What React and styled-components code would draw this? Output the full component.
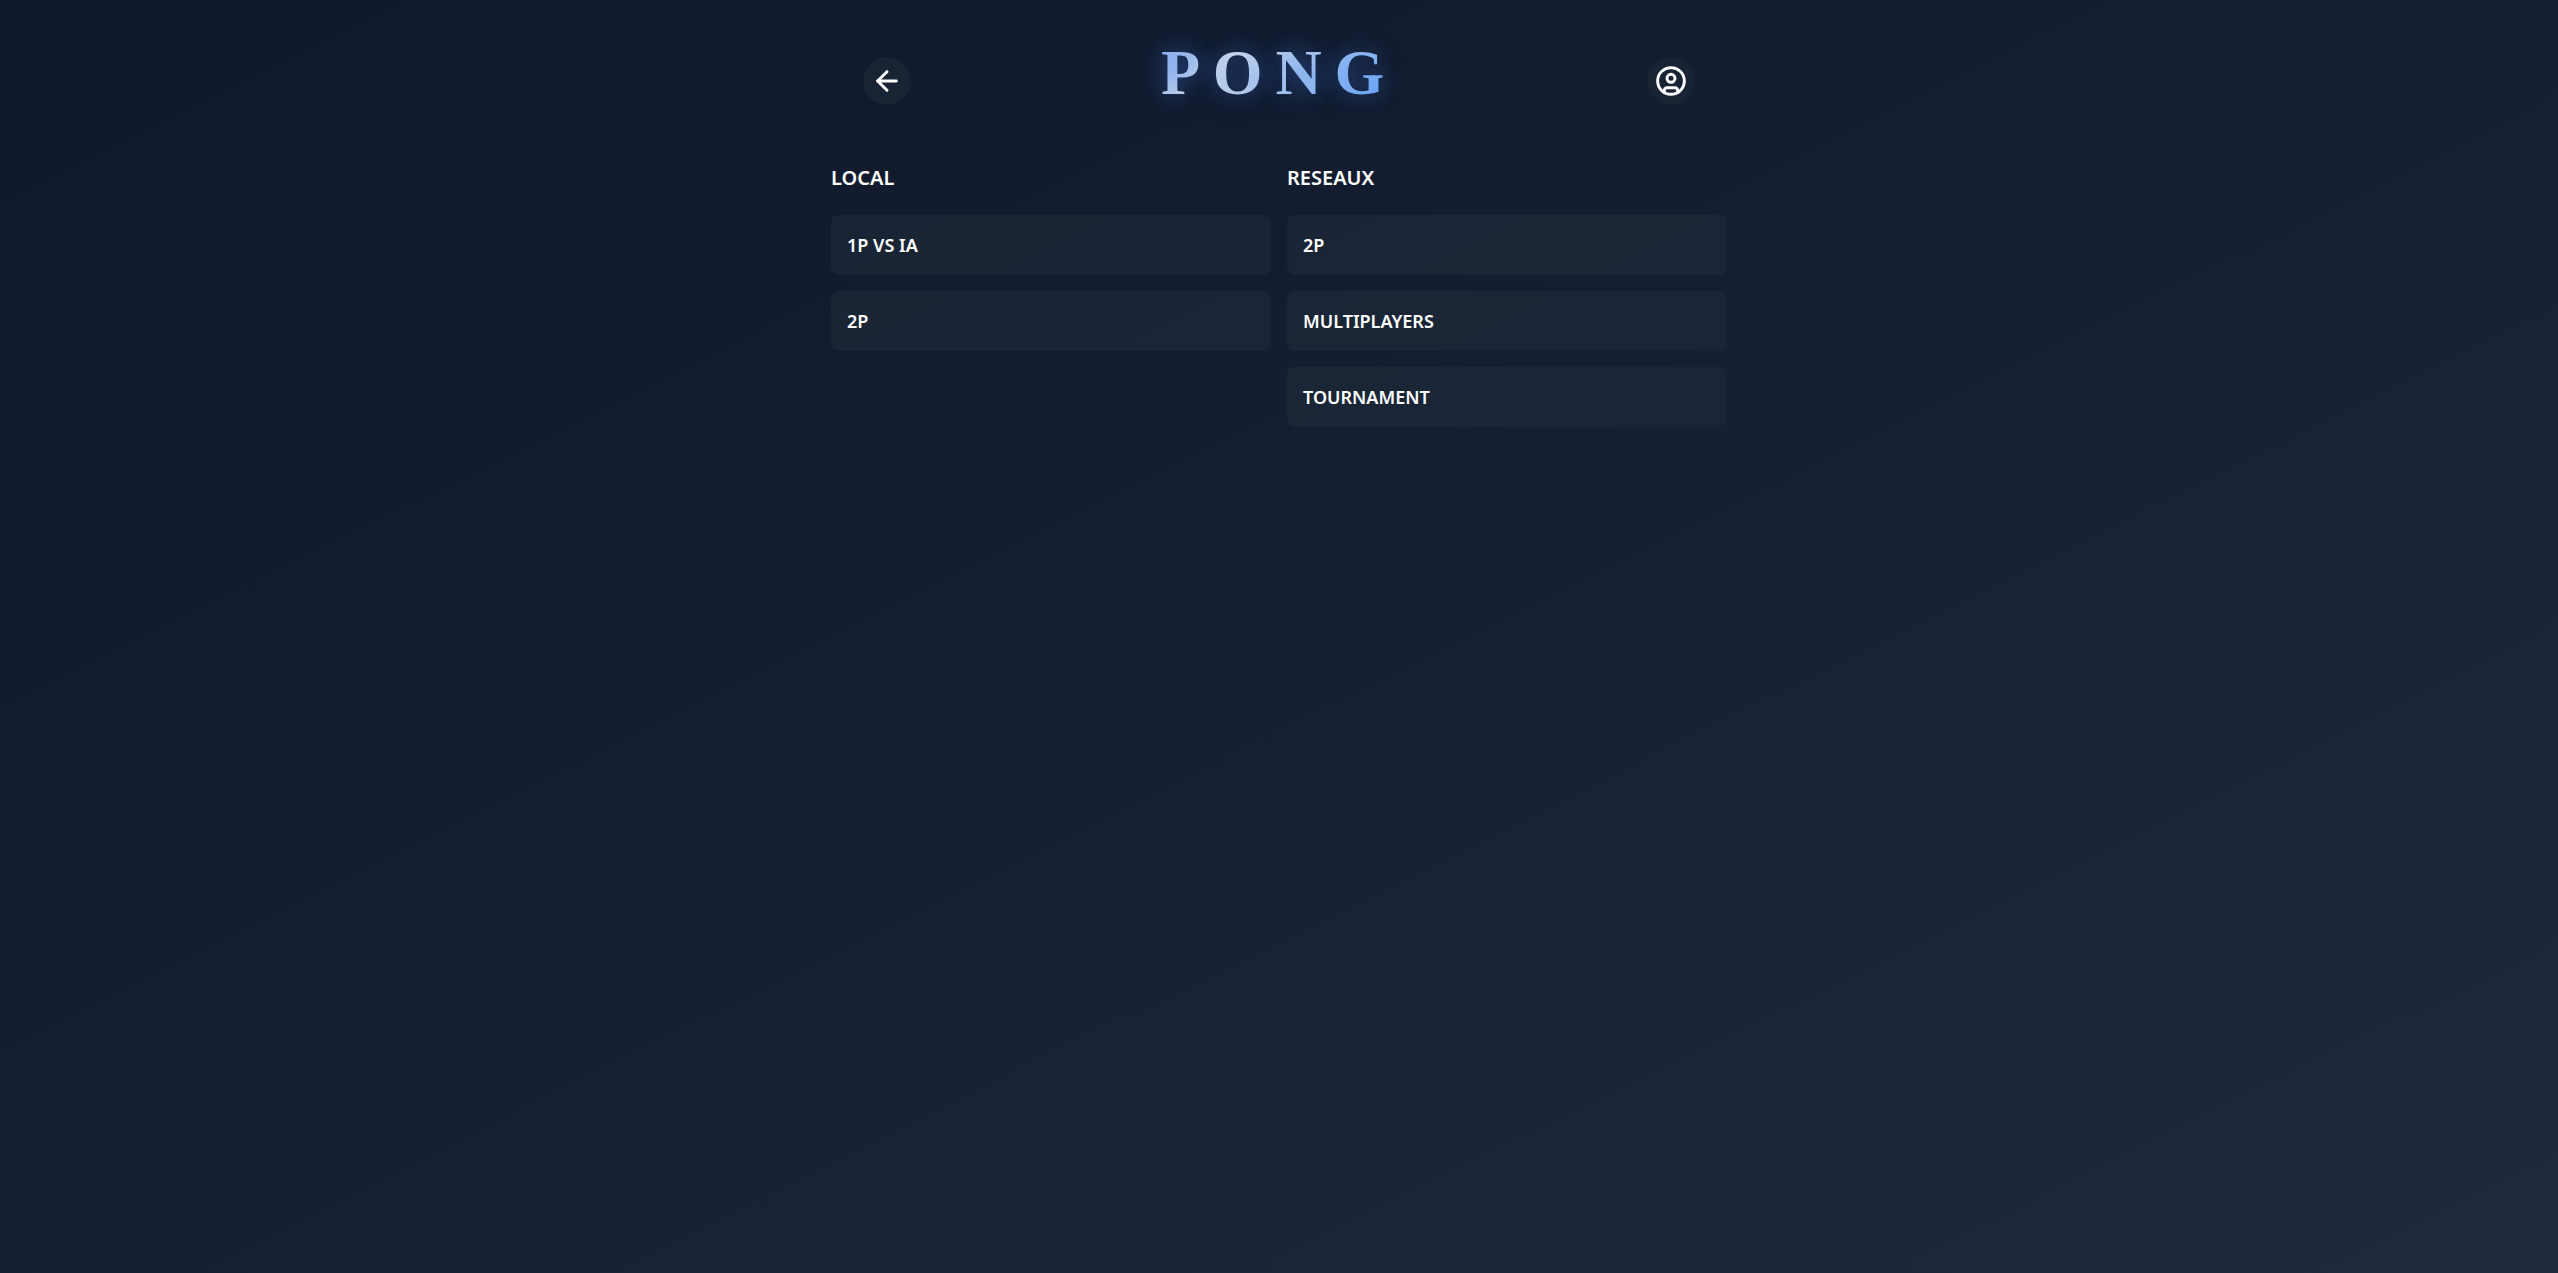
import React from "react";
import styled, { createGlobalStyle } from "styled-components";
import { ArrowLeft, CircleUser } from "lucide-react";

const GlobalStyle = createGlobalStyle`
  *, *::before, *::after { box-sizing: border-box; }
  body {
    margin: 0;
    color: #fff;
    font-family: "Noto Sans", "Open Sans", sans-serif;
  }
`;

const Page = styled.div`
  min-height: 100vh;
  background: linear-gradient(to bottom right, #0f172a, #1e293b);
`;

const Shell = styled.main`
  width: 100%;
  max-width: 896px;
  margin: 0 auto;
`;

const Header = styled.header`
  display: flex;
  align-items: center;
  justify-content: space-between;
  padding: 32px 32px 16px;
`;

const IconButton = styled.button`
  display: grid;
  place-items: center;
  width: 48px;
  height: 48px;
  padding: 0;
  border: 0;
  border-radius: 50%;
  background: #182334;
  color: #fff;
  cursor: pointer;
`;

const Title = styled.h1`
  margin: 0 0 16px;
  font-family: "Liberation Serif", serif;
  font-size: 64px;
  font-weight: 700;
  line-height: 82px;
  letter-spacing: 0.2em;
  color: transparent;
  background: linear-gradient(135deg, #80aaf2, #d8dfe8 30%, #60a0fa);
  background-clip: text;
  text-shadow:
    0 0 20px rgba(59, 130, 246, 0.4),
    0 0 40px rgba(59, 130, 246, 0.2);
`;

const Modes = styled.div`
  display: grid;
  grid-template-columns: repeat(2, 1fr);
  gap: 16px;
  padding-bottom: 32px;
`;

const Column = styled.section`
  display: flex;
  flex-direction: column;
  gap: 16px;
`;

const ColumnTitle = styled.h2`
  margin: 0;
  padding: 18px 0 7px;
  font-size: 20px;
  font-weight: 600;
  line-height: 28px;
`;

const ModeButton = styled.button`
  padding: 16px;
  border: 0;
  border-radius: 8px;
  background: rgba(30, 42, 58, 0.6);
  color: #fff;
  font: 600 18px/28px "Noto Sans", "Open Sans", sans-serif;
  text-align: left;
  cursor: pointer;
`;

const columns = [
  { title: "LOCAL", modes: ["1P VS IA", "2P"] },
  { title: "RESEAUX", modes: ["2P", "MULTIPLAYERS", "TOURNAMENT"] },
];

export default function App() {
  return (
    <Page>
      <GlobalStyle />
      <Shell>
        <Header>
          <IconButton type="button" aria-label="Retour">
            <ArrowLeft size={32} strokeWidth={2.2} />
          </IconButton>
          <Title>PONG</Title>
          <IconButton type="button" aria-label="Profil">
            <CircleUser size={32} strokeWidth={2.2} />
          </IconButton>
        </Header>
        <Modes>
          {columns.map(({ title, modes }) => (
            <Column key={title}>
              <ColumnTitle>{title}</ColumnTitle>
              {modes.map((mode) => (
                <ModeButton key={mode} type="button">{mode}</ModeButton>
              ))}
            </Column>
          ))}
        </Modes>
      </Shell>
    </Page>
  );
}
